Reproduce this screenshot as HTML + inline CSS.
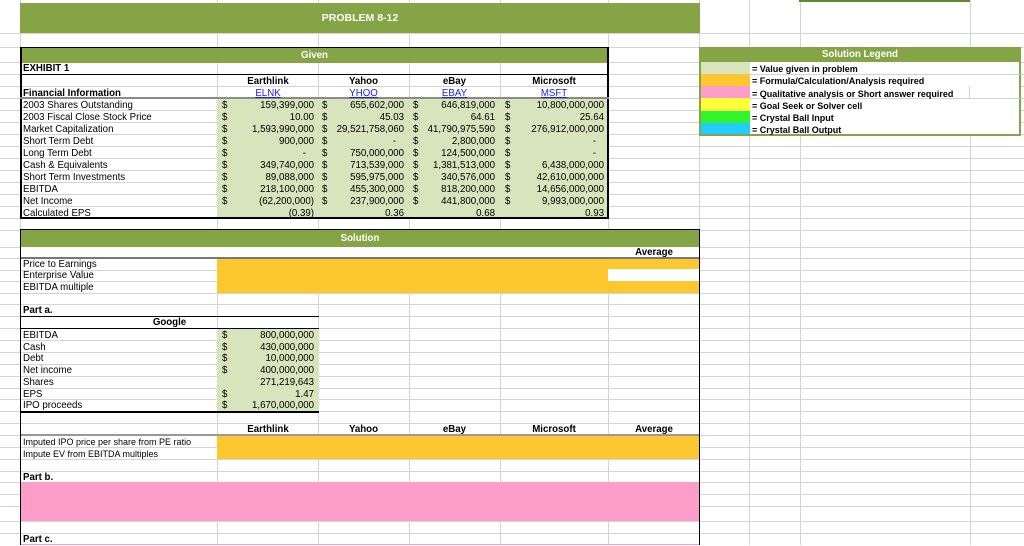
<!DOCTYPE html>
<html><head><meta charset="utf-8"><style>
*{margin:0;padding:0;box-sizing:border-box}
body{width:1024px;height:545px;overflow:hidden;background:#fff;position:relative;font-family:"Liberation Sans",Arial,sans-serif;font-size:9.7px;color:#000}
.a{position:absolute}
.h{position:absolute;left:0;width:1024px;height:1px;background:#d4d4d4}
.v{position:absolute;top:0;height:545px;width:1px;background:#d4d4d4}
.t{position:absolute;height:12px;line-height:12px;white-space:nowrap;transform:translateY(1px)}
.tx{transform:translateY(1px)}
.r{text-align:right}
.c{text-align:center}
.b{font-weight:bold}
.w{color:#fff;font-weight:bold}
.lnk{color:#1a1aff;text-decoration:underline}
</style></head><body>
<!-- gridlines -->
<div class="h" style="top:33px"></div><div class="h" style="top:47px"></div><div class="h" style="top:62px"></div>
<div class="h" style="top:74px"></div><div class="h" style="top:86px"></div><div class="h" style="top:98px"></div>
<div class="h" style="top:110px"></div><div class="h" style="top:122px"></div><div class="h" style="top:134px"></div>
<div class="h" style="top:146px"></div><div class="h" style="top:158px"></div><div class="h" style="top:170px"></div>
<div class="h" style="top:182px"></div><div class="h" style="top:194px"></div><div class="h" style="top:206px"></div>
<div class="h" style="top:218px"></div><div class="h" style="top:230px"></div><div class="h" style="top:247px"></div>
<div class="h" style="top:258px"></div><div class="h" style="top:270px"></div><div class="h" style="top:281px"></div>
<div class="h" style="top:293px"></div><div class="h" style="top:304px"></div><div class="h" style="top:316px"></div>
<div class="h" style="top:328px"></div><div class="h" style="top:340px"></div><div class="h" style="top:352px"></div>
<div class="h" style="top:364px"></div><div class="h" style="top:376px"></div><div class="h" style="top:388px"></div>
<div class="h" style="top:399px"></div><div class="h" style="top:411px"></div><div class="h" style="top:423px"></div>
<div class="h" style="top:435px"></div><div class="h" style="top:447px"></div><div class="h" style="top:459px"></div>
<div class="h" style="top:471px"></div><div class="h" style="top:482px"></div><div class="h" style="top:494px"></div>
<div class="h" style="top:506px"></div><div class="h" style="top:521px"></div><div class="h" style="top:533px"></div>
<div class="v" style="left:20px"></div><div class="v" style="left:217px"></div><div class="v" style="left:318px"></div>
<div class="v" style="left:409px"></div><div class="v" style="left:500px"></div><div class="v" style="left:608px"></div>
<div class="v" style="left:699px"></div><div class="v" style="left:749px"></div><div class="v" style="left:800px"></div>
<div class="v" style="left:970px"></div>

<!-- title -->
<div class="a" style="left:20px;top:3px;width:680px;height:30px;background:#84a445"></div>
<div class="t w c" style="left:20px;top:11px;width:680px;font-size:10.5px">PROBLEM 8-12</div>
<div class="a" style="left:799px;top:0;width:171px;height:2px;background:#5f8a2e"></div>

<!-- Given table -->
<div class="a" style="left:217px;top:98px;width:391px;height:120px;background:#d8e4bc"></div>
<div class="a" style="left:20px;top:47px;width:589px;height:16px;background:#84a445"></div>
<div class="t w c" style="left:20px;top:49px;width:589px">Given</div>
<div class="a" style="left:20px;top:47px;width:589px;height:172px;border:2px solid #000;border-top:1px solid #000"></div>
<div class="a" style="left:20px;top:74px;width:589px;height:1px;background:#000"></div>
<div class="a" style="left:20px;top:97px;width:589px;height:2px;background:#8a8a8a"></div>
<div class="t b" style="left:23px;top:62px">EXHIBIT 1</div>
<div class="t b" style="left:23px;top:87px">Financial Information</div>
<div class="t b c" style="left:217px;top:75px;width:102px">Earthlink</div>
<div class="t b c" style="left:318px;top:75px;width:91px">Yahoo</div>
<div class="t b c" style="left:409px;top:75px;width:91px">eBay</div>
<div class="t b c" style="left:500px;top:75px;width:108px">Microsoft</div>
<div class="t c" style="left:217px;top:87px;width:102px"><span class="lnk">ELNK</span></div>
<div class="t c" style="left:318px;top:87px;width:91px"><span class="lnk">YHOO</span></div>
<div class="t c" style="left:409px;top:87px;width:91px"><span class="lnk">EBAY</span></div>
<div class="t c" style="left:500px;top:87px;width:108px"><span class="lnk">MSFT</span></div>

<div class="t" style="left:23px;top:99px">2003 Shares Outstanding</div>
<div class="t" style="left:23px;top:111px">2003 Fiscal Close Stock Price</div>
<div class="t" style="left:23px;top:123px">Market Capitalization</div>
<div class="t" style="left:23px;top:135px">Short Term Debt</div>
<div class="t" style="left:23px;top:147px">Long Term Debt</div>
<div class="t" style="left:23px;top:159px">Cash &amp; Equivalents</div>
<div class="t" style="left:23px;top:171px">Short Term Investments</div>
<div class="t" style="left:23px;top:183px">EBITDA</div>
<div class="t" style="left:23px;top:195px">Net Income</div>
<div class="t" style="left:23px;top:207px">Calculated EPS</div>

<div class="a tx" style="left:222px;top:99px;line-height:12px;width:10px">$<br>$<br>$<br>$<br>$<br>$<br>$<br>$<br>$</div>
<div class="a tx" style="left:322px;top:99px;line-height:12px;width:10px">$<br>$<br>$<br>$<br>$<br>$<br>$<br>$<br>$</div>
<div class="a tx" style="left:413px;top:99px;line-height:12px;width:10px">$<br>$<br>$<br>$<br>$<br>$<br>$<br>$<br>$</div>
<div class="a tx" style="left:505px;top:99px;line-height:12px;width:10px">$<br>$<br>$<br>$<br>$<br>$<br>$<br>$<br>$</div>
<div class="a r tx" style="left:225px;top:99px;width:89px;line-height:12px">159,399,000<br>10.00<br>1,593,990,000<br>900,000<br>-&nbsp;&nbsp;&nbsp;<br>349,740,000<br>89,088,000<br>218,100,000<br>(62,200,000)<br>(0.39)</div>
<div class="a r tx" style="left:326px;top:99px;width:78px;line-height:12px">655,602,000<br>45.03<br>29,521,758,060<br>-&nbsp;&nbsp;&nbsp;<br>750,000,000<br>713,539,000<br>595,975,000<br>455,300,000<br>237,900,000<br>0.36</div>
<div class="a r tx" style="left:416px;top:99px;width:79px;line-height:12px">646,819,000<br>64.61<br>41,790,975,590<br>2,800,000<br>124,500,000<br>1,381,513,000<br>340,576,000<br>818,200,000<br>441,800,000<br>0.68</div>
<div class="a r tx" style="left:515px;top:99px;width:89px;line-height:12px">10,800,000,000<br>25.64<br>276,912,000,000<br>-&nbsp;&nbsp;&nbsp;<br>-&nbsp;&nbsp;&nbsp;<br>6,438,000,000<br>42,610,000,000<br>14,656,000,000<br>9,993,000,000<br>0.93</div>

<!-- Legend -->
<div class="a" style="left:700px;top:47px;width:320px;height:89px;background:#fff"></div>
<div class="a" style="left:700px;top:47px;width:320px;height:15px;background:#84a445"></div>
<div class="t w c" style="left:700px;top:48px;width:320px">Solution Legend</div>
<div class="a" style="left:700px;top:62px;width:50px;height:12px;background:#d8e4bc"></div>
<div class="a" style="left:700px;top:74px;width:50px;height:12px;background:#fdc82f"></div>
<div class="a" style="left:700px;top:86px;width:50px;height:12px;background:#fd9dca"></div>
<div class="a" style="left:700px;top:98px;width:50px;height:13px;background:#ffff3a"></div>
<div class="a" style="left:700px;top:111px;width:50px;height:12px;background:#2ff52f"></div>
<div class="a" style="left:700px;top:123px;width:50px;height:12px;background:#22ccff"></div>
<div class="a" style="left:699px;top:47px;width:322px;height:89px;border:2px solid #84a445"></div>
<div class="a" style="left:750px;top:74px;width:270px;height:1px;background:#d4d4d4"></div>
<div class="a" style="left:750px;top:98px;width:270px;height:1px;background:#d4d4d4"></div>
<div class="a" style="left:969px;top:86px;width:1px;height:12px;background:#d4d4d4"></div>
<div class="t b" style="left:752px;top:62px;font-size:9px">= Value given in problem</div>
<div class="t b" style="left:752px;top:74px;font-size:9px">= Formula/Calculation/Analysis required</div>
<div class="t b" style="left:752px;top:87px;font-size:9px">= Qualitative analysis or Short answer required</div>
<div class="t b" style="left:752px;top:99px;font-size:9px">= Goal Seek or Solver cell</div>
<div class="t b" style="left:752px;top:111px;font-size:9px">= Crystal Ball Input</div>
<div class="t b" style="left:752px;top:123px;font-size:9px">= Crystal Ball Output</div>

<!-- Solution -->
<div class="a" style="left:20px;top:230px;width:680px;height:17px;background:#84a445"></div>
<div class="t w c" style="left:20px;top:232px;width:680px">Solution</div>
<div class="a" style="left:20px;top:247px;width:680px;height:11px;background:#fff"></div>
<div class="t b c" style="left:608px;top:246px;width:92px">Average</div>
<div class="a" style="left:20px;top:257px;width:680px;height:2px;background:#777"></div>
<div class="a" style="left:217px;top:259px;width:483px;height:34px;background:#fdc82f"></div>
<div class="a" style="left:608px;top:269px;width:92px;height:12px;background:#fff"></div>
<div class="t" style="left:23px;top:258px">Price to Earnings</div>
<div class="t" style="left:23px;top:269px">Enterprise Value</div>
<div class="t" style="left:23px;top:281px">EBITDA multiple</div>

<div class="t b" style="left:23px;top:304px">Part a.</div>
<div class="a" style="left:20px;top:316px;width:299px;height:1px;background:#000"></div>
<div class="t b c" style="left:20px;top:316px;width:299px">Google</div>
<div class="a" style="left:20px;top:328px;width:299px;height:1px;background:#000"></div>
<div class="a" style="left:217px;top:329px;width:102px;height:82px;background:#d8e4bc"></div>
<div class="a tx" style="left:23px;top:329px;line-height:11.7px">EBITDA<br>Cash<br>Debt<br>Net income<br>Shares<br>EPS<br>IPO proceeds</div>
<div class="a tx" style="left:222px;top:329px;line-height:11.7px">$<br>$<br>$<br>$<br>&nbsp;<br>$<br>$</div>
<div class="a r tx" style="left:225px;top:329px;width:89px;line-height:11.7px">800,000,000<br>430,000,000<br>10,000,000<br>400,000,000<br>271,219,643<br>1.47<br>1,670,000,000</div>
<div class="a" style="left:20px;top:411px;width:299px;height:2px;background:#000"></div>

<div class="t b c" style="left:217px;top:423px;width:102px">Earthlink</div>
<div class="t b c" style="left:318px;top:423px;width:91px">Yahoo</div>
<div class="t b c" style="left:409px;top:423px;width:91px">eBay</div>
<div class="t b c" style="left:500px;top:423px;width:108px">Microsoft</div>
<div class="t b c" style="left:608px;top:423px;width:92px">Average</div>
<div class="a" style="left:20px;top:434px;width:680px;height:2px;background:#999"></div>
<div class="a" style="left:217px;top:436px;width:483px;height:23px;background:#fdc82f"></div>
<div class="t" style="left:23px;top:435px;font-size:9px">Imputed IPO price per share from PE ratio</div>
<div class="t" style="left:23px;top:447px;font-size:9px">Impute EV from EBITDA multiples</div>
<div class="t b" style="left:23px;top:471px">Part b.</div>
<div class="a" style="left:20px;top:482px;width:680px;height:39px;background:#fd9dca"></div>
<div class="t b" style="left:23px;top:533px">Part c.</div>
<div class="a" style="left:20px;top:544px;width:680px;height:1px;background:#fd9dca"></div>

<div class="a" style="left:20px;top:230px;width:1px;height:315px;background:#000"></div>
<div class="a" style="left:699px;top:230px;width:1px;height:315px;background:#000"></div>
<div class="a" style="left:20px;top:229px;width:680px;height:1px;background:#000"></div>
</body></html>
